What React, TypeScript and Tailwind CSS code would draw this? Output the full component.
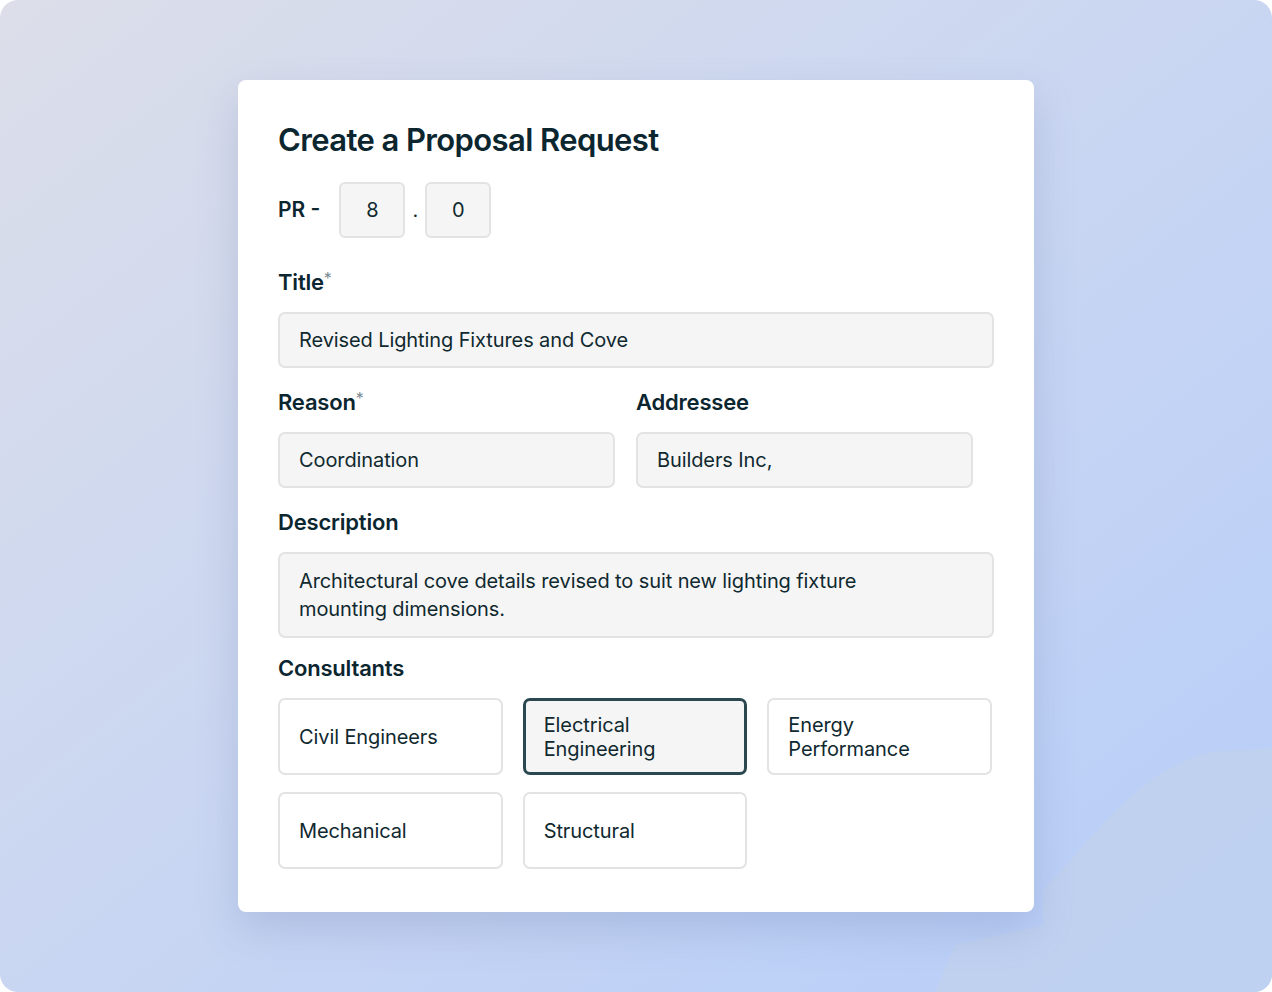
import React from "react";

const font = { fontFamily: "Inter, 'Noto Sans', 'Liberation Sans', sans-serif" };

function Label({ children, req }: { children: React.ReactNode; req?: boolean }) {
  return (
    <div className="h-[28px] text-[22px] font-semibold leading-[28px] text-[#0c2630] tracking-[-0.2px]">
      {children}
      {req && <span className="relative top-[-6px] text-[16px] font-normal leading-[0] text-[#7d8c92]">*</span>}
    </div>
  );
}

function Field({ children, className = "" }: { children: React.ReactNode; className?: string }) {
  return (
    <div
      className={`flex items-center rounded-[7px] border-2 border-[#e3e3e3] bg-[#f5f5f5] px-[19px] text-[20px] tracking-[-0.1px] text-[#10292f] ${className}`}
    >
      {children}
    </div>
  );
}

function Card({ children, selected }: { children: React.ReactNode; selected?: boolean }) {
  return (
    <div
      className={`flex h-[77px] items-center rounded-[7px] px-[19px] text-[20px] leading-[24px] tracking-[-0.1px] text-[#10292f] ${
        selected ? "border-[3px] border-[#2b4850] bg-[#f5f5f5] pl-[18px]" : "border-2 border-[#e3e3e3] bg-white"
      }`}
    >
      <div>{children}</div>
    </div>
  );
}

export default function App() {
  return (
    <div className="h-[992px] w-[1272px] bg-white" style={font}>
      <div className="relative flex h-full w-full justify-center overflow-hidden rounded-[18px] bg-gradient-to-br from-[#dcdee9] via-[#c9d6f2] to-[#b6cdf9]">
        <svg className="absolute inset-0" width="1272" height="992" viewBox="0 0 1272 992">
          <path
            d="M1043 890 C1100 830 1140 770 1210 752 L1272 748 L1272 992 L935 992 L955 945 L1043 925 Z"
            fill="#c2d1ee"
            opacity="0.75"
          />
        </svg>
        <div className="relative mt-[80px] h-[832px] w-[796px] rounded-[8px] bg-white px-[40px] pt-[118px] shadow-[0_18px_40px_rgba(90,110,160,0.22)]">
          <div className="absolute left-[40px] top-[40px] text-[31px] font-semibold leading-[40px] tracking-[-0.6px] text-[#0c2630]">
            Create a Proposal Request
          </div>
          <div className="absolute left-[40px] top-[102px] flex items-center">
            <div className="mr-[19px] text-[21px] font-semibold text-[#0c2630]">PR -</div>
            <div className="flex h-[56px] w-[66px] items-center justify-center rounded-[6px] border-2 border-[#e3e3e3] bg-[#f5f5f5] text-[20px] text-[#10292f]">
              8
            </div>
            <div className="w-[20px] text-center text-[20px] text-[#10292f]">.</div>
            <div className="flex h-[56px] w-[66px] items-center justify-center rounded-[6px] border-2 border-[#e3e3e3] bg-[#f5f5f5] text-[20px] text-[#10292f]">
              0
            </div>
          </div>

          <div className="mt-[70px]">
            <Label req>Title</Label>
            <Field className="mt-[16px] h-[56px]">Revised Lighting Fixtures and Cove</Field>
          </div>

          <div className="mt-[20px] flex gap-[21px]">
            <div className="w-[337px]">
              <Label req>Reason</Label>
              <Field className="mt-[16px] h-[56px]">Coordination</Field>
            </div>
            <div className="w-[337px]">
              <Label>Addressee</Label>
              <Field className="mt-[16px] h-[56px]">Builders Inc,</Field>
            </div>
          </div>

          <div className="mt-[20px]">
            <Label>Description</Label>
            <Field className="mt-[16px] h-[86px] leading-[28px]">
              <div>
                Architectural cove details revised to suit new lighting fixture
                <br />
                mounting dimensions.
              </div>
            </Field>
          </div>

          <div className="mt-[16px]">
            <Label>Consultants</Label>
            <div className="mt-[16px] grid w-[714px] grid-cols-3 gap-x-[20px] gap-y-[17px]">
              <Card>Civil Engineers</Card>
              <Card selected>
                Electrical
                <br />
                Engineering
              </Card>
              <Card>
                Energy
                <br />
                Performance
              </Card>
              <Card>Mechanical</Card>
              <Card>Structural</Card>
            </div>
          </div>
        </div>
      </div>
    </div>
  );
}
